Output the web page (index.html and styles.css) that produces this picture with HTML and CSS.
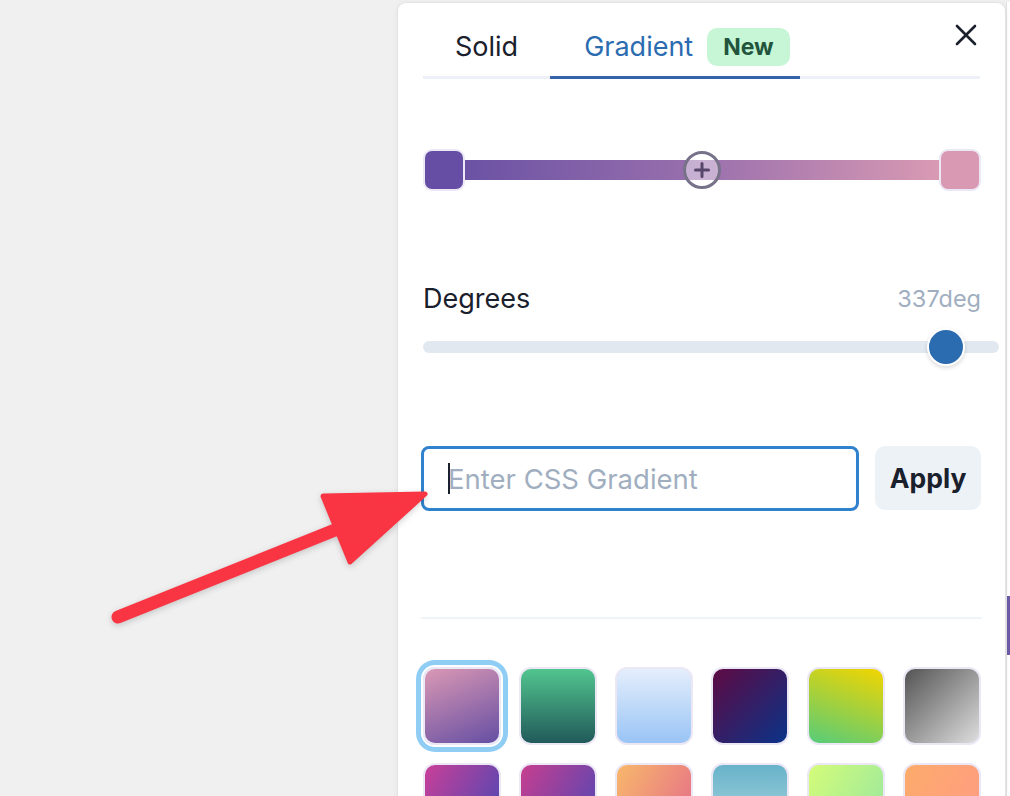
FILE: index.html
```html
<!DOCTYPE html>
<html lang="en">
<head>
<meta charset="utf-8">
<title>Gradient picker</title>
<link rel="stylesheet" href="styles.css">
</head>
<body>
<div class="page">
  <div class="backdrop"></div>
  <section class="panel">
    <button class="close" aria-label="Close">
      <svg width="22" height="22" viewBox="0 0 22 22"><path d="M2 2L20 20M20 2L2 20" stroke="#1a202c" stroke-width="2.6" stroke-linecap="round"/></svg>
    </button>
    <div class="tabs">
      <div class="tab">Solid</div>
      <div class="tab active">Gradient <span class="badge">New</span></div>
    </div>
    <div class="gradient-bar">
      <div class="stop stop-start"></div>
      <div class="track">
        <span class="add">
          <svg width="18" height="18" viewBox="0 0 18 18"><path d="M9 2.5V15.5M2.5 9H15.5" stroke="#55466a" stroke-width="3" stroke-linecap="round"/></svg>
        </span>
      </div>
      <div class="stop stop-end"></div>
    </div>
    <div class="degrees-row">
      <span class="label">Degrees</span>
      <span class="value">337deg</span>
    </div>
    <div class="slider">
      <div class="slider-track"></div>
      <div class="thumb" style="--v:0.936"></div>
    </div>
    <div class="css-row">
      <div class="css-input"><span class="caret"></span><span class="placeholder">Enter CSS Gradient</span></div>
      <button class="apply">Apply</button>
    </div>
    <div class="divider"></div>
    <div class="swatches">
      <div class="swatch selected g1"></div>
      <div class="swatch g2"></div>
      <div class="swatch g3"></div>
      <div class="swatch g4"></div>
      <div class="swatch g5"></div>
      <div class="swatch g6"></div>
      <div class="swatch g7"></div>
      <div class="swatch g8"></div>
      <div class="swatch g9"></div>
      <div class="swatch g10"></div>
      <div class="swatch g11"></div>
      <div class="swatch g12"></div>
    </div>
  </section>
  <div class="strip"><div class="strip-bar"></div></div>
</div>
<svg class="arrow" width="1010" height="796" viewBox="0 0 1010 796">
  <line x1="118" y1="617" x2="345" y2="526" stroke="#fa3543" stroke-width="13" stroke-linecap="round"/>
  <polygon points="425,494 323,496 350,562" fill="#fa3543" stroke="#fa3543" stroke-width="5" stroke-linejoin="round"/>
</svg>
</body>
</html>
```

FILE: styles.css
```css
html, body {
  margin: 0;
  padding: 0;
}
body {
  background: #f0f0f0;
  font-family: Inter, "Noto Sans", "Liberation Sans", sans-serif;
  height: 796px;
  overflow: hidden;
  position: relative;
}
.page {
  display: flex;
  height: 796px;
  padding-top: 2px;
  box-sizing: border-box;
}
.backdrop {
  flex: 1;
}
.panel {
  width: 609px;
  flex: none;
  box-sizing: border-box;
  background: #fff;
  border: 1px solid #e3e3e6;
  border-bottom: none;
  border-radius: 9px 9px 0 0;
  padding: 14px 24px 0 25px;
  position: relative;
  overflow: hidden;
  box-shadow: 0 1px 6px rgba(0, 0, 0, 0.05);
}
.close {
  position: absolute;
  top: 21px;
  right: 28px;
  width: 22px;
  height: 22px;
  padding: 0;
  border: none;
  background: transparent;
  display: flex;
}
.tabs {
  display: flex;
  border-bottom: 3px solid #edf1f7;
  margin-right: 1px;
}
.tab {
  height: 59px;
  display: flex;
  align-items: center;
  padding: 0 32px;
  font-size: 27px;
  color: #1a202c;
  border-bottom: 3px solid transparent;
  margin-bottom: -3px;
}
.tab.active {
  color: #2b6cb0;
  border-bottom-color: #3563ab;
  padding-left: 34px;
  padding-right: 10px;
  gap: 14px;
}
.badge {
  background: #c6f6d5;
  color: #22543d;
  font-weight: 700;
  font-size: 23px;
  height: 38px;
  padding: 0 16px;
  border-radius: 10px;
  display: flex;
  align-items: center;
}
.gradient-bar {
  display: flex;
  align-items: center;
  height: 42px;
  margin-top: 70px;
}
.stop {
  width: 42px;
  height: 42px;
  box-sizing: border-box;
  flex: none;
  border: 2px solid #ece8f6;
  border-radius: 9px;
  position: relative;
  z-index: 1;
}
.stop-start {
  background: #654ea3;
}
.stop-end {
  background: #da99b3;
}
.track {
  flex: 1;
  height: 20px;
  margin: 0 -1px;
  background: linear-gradient(90deg, #6b52a4, #9a70ad 50%, #d99ab3);
  display: flex;
  align-items: center;
  justify-content: center;
}
.add {
  width: 38px;
  height: 38px;
  flex: none;
  box-sizing: border-box;
  border-radius: 50%;
  border: 3px solid #77728a;
  background: rgba(255, 255, 255, 0.45);
  display: flex;
  align-items: center;
  justify-content: center;
}
.degrees-row {
  display: flex;
  justify-content: space-between;
  align-items: center;
  height: 34px;
  margin-top: 90px;
}
.label {
  font-size: 27px;
  color: #1a202c;
}
.value {
  font-size: 23.5px;
  color: #a0aec0;
}
.slider {
  position: relative;
  height: 38px;
  margin-top: 13px;
  margin-right: -18px;
  display: flex;
  align-items: center;
}
.slider-track {
  flex: 1;
  height: 12px;
  border-radius: 6px;
  background: #e2e8f0;
}
.thumb {
  position: absolute;
  top: 0;
  left: calc(var(--v) * (100% - 38px));
  width: 38px;
  height: 38px;
  box-sizing: border-box;
  border-radius: 50%;
  background: #2b6cb0;
  border: 2px solid #fff;
  box-shadow: 0 2px 4px rgba(0, 0, 0, 0.15);
}
.css-row {
  display: flex;
  gap: 16px;
  margin-top: 80px;
}
.css-input {
  width: 439px;
  height: 65px;
  margin-left: -2px;
  box-sizing: border-box;
  border: 3px solid #3182ce;
  border-radius: 8px;
  display: flex;
  align-items: center;
  padding-left: 24px;
  font-size: 27.5px;
  color: #a0aec0;
}
.caret {
  width: 2px;
  height: 31px;
  background: #1a202c;
  margin-right: -2px;
}
.apply {
  width: 106px;
  height: 64px;
  border: none;
  border-radius: 10px;
  background: #edf2f7;
  font-family: inherit;
  font-weight: 700;
  font-size: 26.5px;
  color: #1a202c;
  padding: 0;
}
.divider {
  height: 2px;
  background: #f0f3f7;
  margin: 106px -1px 0 -2px;
}
.swatches {
  display: grid;
  grid-template-columns: repeat(6, 78px);
  gap: 18px;
  margin-top: 48px;
  padding-left: 0;
}
.swatch {
  height: 78px;
  box-sizing: border-box;
  border: 2px solid #ebe7f5;
  border-radius: 12px;
}
.swatch.selected {
  box-shadow: 0 0 0 2px #fff, 0 0 0 7px #90cdf4;
}
.g1 { background: linear-gradient(337deg, #654ea3, #da98b4); }
.g2 { background: linear-gradient(180deg, #52c58f, #215a5a); }
.g3 { background: linear-gradient(180deg, #e4eefc, #99c4f5); }
.g4 { background: linear-gradient(135deg, #5e0a43, #0a3388); }
.g5 { background: linear-gradient(20deg, #56cc7a, #f2d500); }
.g6 { background: linear-gradient(135deg, #545454, #dedede); }
.g7 { background: linear-gradient(120deg, #c93f98, #4549b5); }
.g8 { background: linear-gradient(120deg, #c73e8f, #4d48b6); }
.g9 { background: linear-gradient(120deg, #f8b86a, #e4698c); }
.g10 { background: linear-gradient(180deg, #68b3ca, #b2d9e1); }
.g11 { background: linear-gradient(120deg, #d4fc79, #96e6a1); }
.g12 { background: linear-gradient(120deg, #fdab6b, #ff9b85); }
.strip {
  width: 4px;
  flex: none;
  background: #fff;
  border-left: 1px solid #e2e2e2;
  box-sizing: border-box;
}
.strip-bar {
  margin-top: 594px;
  height: 59px;
  background: #6d5ba8;
}
.arrow {
  position: absolute;
  left: 0;
  top: 0;
  pointer-events: none;
  filter: drop-shadow(0 2px 3px rgba(0, 0, 0, 0.18));
}
```
